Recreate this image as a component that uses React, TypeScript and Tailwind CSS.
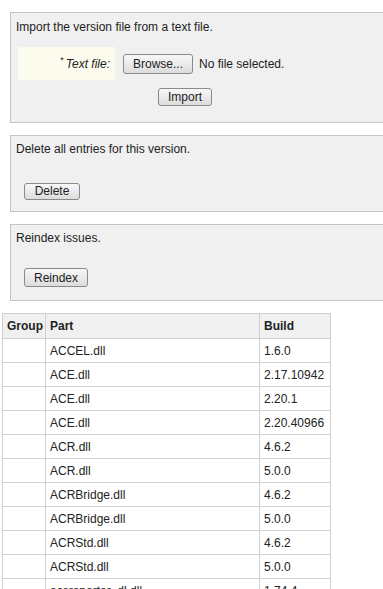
const rows: [string, string][] = [
  ["ACCEL.dll", "1.6.0"],
  ["ACE.dll", "2.17.10942"],
  ["ACE.dll", "2.20.1"],
  ["ACE.dll", "2.20.40966"],
  ["ACR.dll", "4.6.2"],
  ["ACR.dll", "5.0.0"],
  ["ACRBridge.dll", "4.6.2"],
  ["ACRBridge.dll", "5.0.0"],
  ["ACRStd.dll", "4.6.2"],
  ["ACRStd.dll", "5.0.0"],
  ["acsreporter_dl.dll", "1.74.4"],
];

function Btn({ label, w, h }: { label: string; w: string; h: string }) {
  return (
    <button
      className={`${h} ${w} rounded-[3px] border border-[#8a8a8a] bg-gradient-to-b from-[#f8f8f8] to-[#dcdcdc] text-[12px] leading-none text-[#222]`}
    >
      {label}
    </button>
  );
}

export default function App() {
  return (
    <div
      className="w-[383px] h-[589px] overflow-hidden bg-white text-[12px] text-[#222]"
      style={{ fontFamily: '"Liberation Sans", Arial, sans-serif' }}
    >
      <div className="pl-[10px] pt-[12px]">
        <div className="w-[390px] h-[111px] border border-[#c4c4c4] bg-[#f0f0f0] pl-[5px] pt-[7px]">
          <p className="leading-[15px]">Import the version file from a text file.</p>
          <div className="mt-[12px] flex items-center">
            <div className="ml-[2px] w-[97px] h-[33px] bg-[#fcfcee] flex items-center justify-end pr-[5px] italic">
              <span className="text-[9px] not-italic mr-[2px] -mt-[6px]">*</span>
              Text file:
            </div>
            <div className="ml-[8px]">
              <Btn label="Browse..." w="w-[70px]" h="h-[20px]" />
            </div>
            <span className="ml-[6px]">No file selected.</span>
          </div>
          <div className="mt-[8px] pl-[142px]">
            <Btn label="Import" w="w-[54px]" h="h-[18px]" />
          </div>
        </div>

        <div className="mt-[12px] w-[390px] h-[77px] border border-[#c4c4c4] bg-[#f0f0f0] pl-[5px] pt-[6px]">
          <p className="leading-[15px]">Delete all entries for this version.</p>
          <div className="mt-[25px] pl-[8px]">
            <Btn label="Delete" w="w-[56px]" h="h-[17px]" />
          </div>
        </div>

        <div className="mt-[12px] w-[390px] h-[77px] border border-[#c4c4c4] bg-[#f0f0f0] pl-[5px] pt-[6px]">
          <p className="leading-[15px]">Reindex issues.</p>
          <div className="mt-[22px] pl-[8px]">
            <Btn label="Reindex" w="w-[64px]" h="h-[19px]" />
          </div>
        </div>
      </div>

      <table className="mt-[12px] ml-[2px] w-[328px] table-fixed border-collapse">
        <colgroup>
          <col className="w-[43px]" />
          <col className="w-[214px]" />
          <col className="w-[71px]" />
        </colgroup>
        <thead>
          <tr className="bg-[#f0f0f0]">
            <th className="h-[25px] border border-[#cfcfcf] px-[4px] text-left font-bold">Group</th>
            <th className="border border-[#cfcfcf] px-[4px] text-left font-bold">Part</th>
            <th className="border border-[#cfcfcf] px-[4px] text-left font-bold">Build</th>
          </tr>
        </thead>
        <tbody>
          {rows.map(([part, build], i) => (
            <tr key={i}>
              <td className="h-[24px] border border-[#cfcfcf] px-[4px]"></td>
              <td className="border border-[#cfcfcf] px-[4px]">{part}</td>
              <td className="border border-[#cfcfcf] px-[4px] whitespace-nowrap">{build}</td>
            </tr>
          ))}
        </tbody>
      </table>
    </div>
  );
}
